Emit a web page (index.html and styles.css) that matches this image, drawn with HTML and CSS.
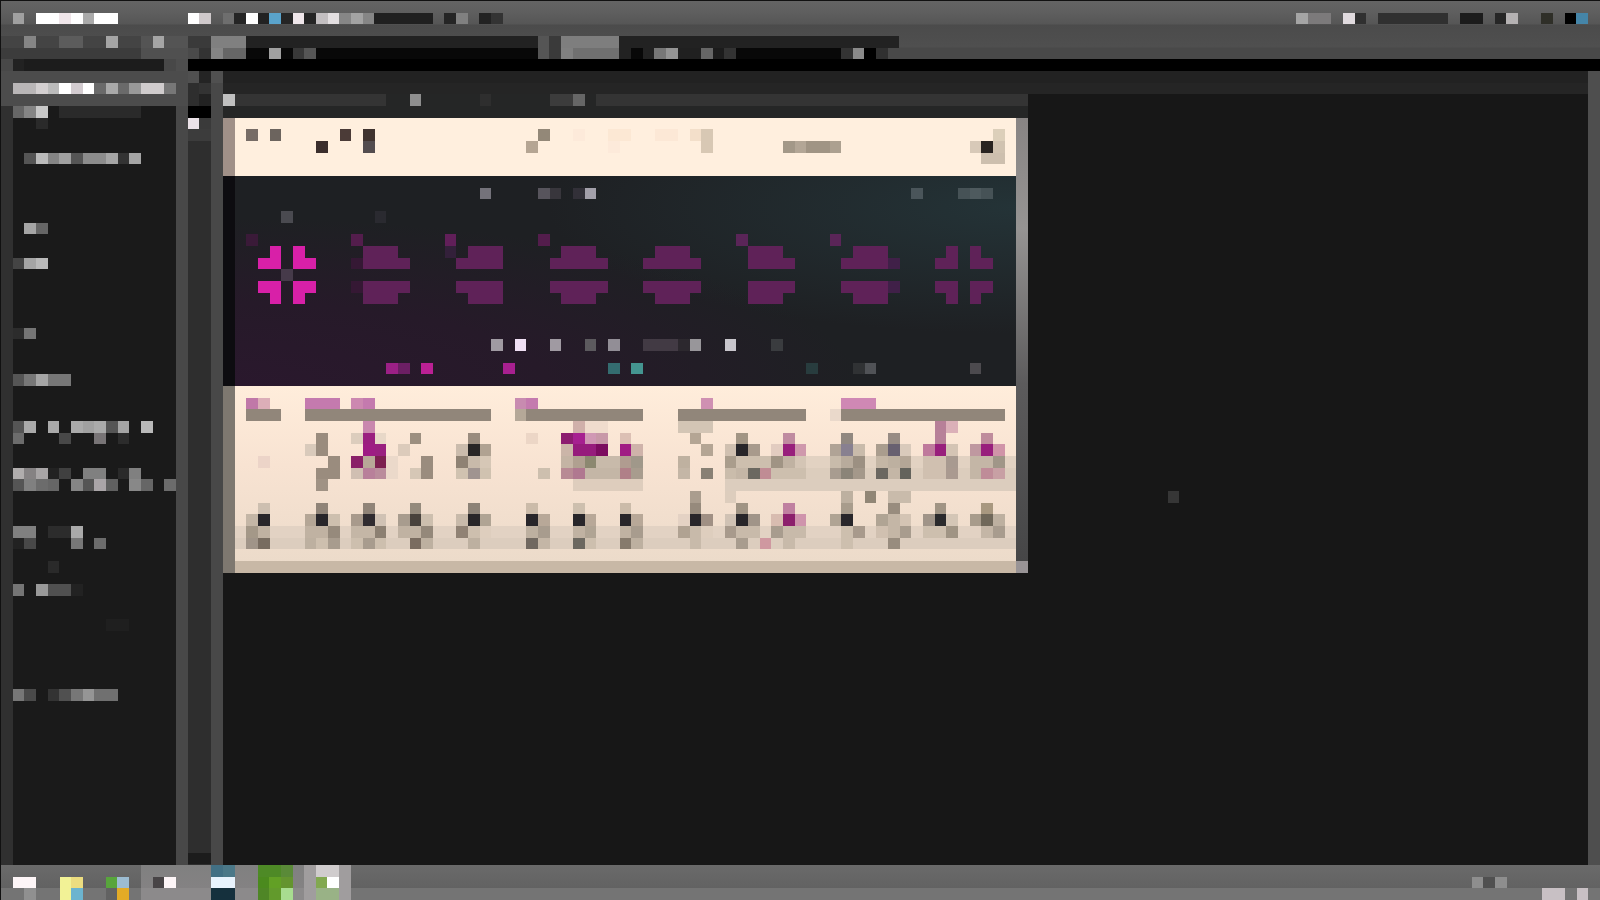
FILE: index.html
```html
<!DOCTYPE html>
<html lang="en">
<head>
<meta charset="utf-8">
<title>Workspace</title>
<link rel="stylesheet" href="styles.css">
</head>
<body>
<header class="topbar">
  <svg class="tiles" viewBox="0 0 77 6" aria-hidden="true"></svg>
  <svg class="tiles" viewBox="103 0 34 5" aria-hidden="true"></svg>
</header>
<div class="workspace">
  <aside class="browser">
    <svg class="tiles" viewBox="0 6 19 68" aria-hidden="true"></svg>
  </aside>
  <main class="stage">
    <svg class="tiles" viewBox="19 6 82 43" aria-hidden="true">
      <defs>
        <linearGradient id="panel" x1="0" y1="0" x2="0" y2="1"><stop offset="0" stop-color="#ffeddb"/><stop offset=".45" stop-color="#f8e3d2"/><stop offset="1" stop-color="#ecdbca"/></linearGradient>
        <linearGradient id="edge" x1="0" y1="0" x2="0" y2="1"><stop offset="0" stop-color="#888483"/><stop offset=".25" stop-color="#969493"/><stop offset=".6" stop-color="#5c5b5c"/><stop offset="1" stop-color="#464647"/></linearGradient>
        <radialGradient id="violet" cx="0" cy="1" r=".8"><stop offset="0" stop-color="#2a182d"/><stop offset=".5" stop-color="#261a29"/><stop offset="1" stop-color="#261a29" stop-opacity="0"/></radialGradient>
        <radialGradient id="teal" cx="1" cy=".15" r=".6"><stop offset="0" stop-color="#243337"/><stop offset="1" stop-color="#243337" stop-opacity="0"/></radialGradient>
      </defs>
      <rect x="19" y="8" width="69" height="2" fill="#252626"/>
      <rect x="19" y="10" width="1" height="5" fill="#a09088"/>
      <rect x="20" y="10" width="67" height="5" fill="#ffefde"/>
      <rect x="19" y="15" width="1" height="18" fill="#0d0c10"/>
      <rect x="20" y="15" width="67" height="18" fill="#1e2023"/>
      <rect x="20" y="15" width="67" height="18" fill="url(#violet)"/>
      <rect x="20" y="15" width="67" height="18" fill="url(#teal)"/>
      <rect x="19" y="33" width="1" height="16" fill="#7e7870"/>
      <rect x="20" y="33" width="67" height="15" fill="url(#panel)"/>
      <rect x="20" y="48" width="67" height="1" fill="#c8b8a6"/>
      <rect x="87" y="10" width="1" height="38" fill="url(#edge)"/>
      <rect x="87" y="48" width="1" height="1" fill="#999496"/>
    </svg>
  </main>
  <div class="rail"></div>
</div>
<footer class="taskbar">
  <nav class="apps" aria-label="Applications">
    <button class="app" aria-label="Start"><svg class="tiles" viewBox="0 74 4 3"></svg></button>
    <button class="app" aria-label="Files"><svg class="tiles" viewBox="4 74 4 3"></svg></button>
    <button class="app" aria-label="Browser"><svg class="tiles" viewBox="8 74 4 3"></svg></button>
    <button class="app open" aria-label="Player"><svg class="tiles" viewBox="12 74 4 3"></svg></button>
    <button class="app open" aria-label="Editor"><svg class="tiles" viewBox="16 74 5 3"></svg></button>
    <button class="app open" aria-label="Studio"><svg class="tiles" viewBox="21 74 5 3"></svg></button>
    <button class="app active" aria-label="Mixer"><svg class="tiles" viewBox="26 74 4 3"></svg></button>
  </nav>
  <svg class="tiles" viewBox="125 74 12 3" aria-hidden="true"></svg>
</footer>
<script src="tiles.js"></script>
</body>
</html>
```
FILE: styles.css
```css
* { box-sizing: border-box; }
html { height: 100%; }
body {
  margin: 0;
  min-height: 100%;
  display: flex;
  flex-direction: column;
  border-top: 1px solid #111;
  border-left: 1px solid #111;
  background: #171717;
  font-family: "Liberation Sans", Arial, sans-serif;
}
.tiles {
  display: block;
  flex: none;
  shape-rendering: crispEdges;
}
.topbar {
  display: flex;
  justify-content: space-between;
  height: 70px;
  background: linear-gradient(#646464 0, #5e5e5e 12px, #565656 23px, #4b4b4b 24px, #4f4f4f 46px, #494949 47px, #494949 58px, #000 58px);
}
.workspace {
  display: flex;
  flex: 1;
}
.browser {
  flex: none;
  background: linear-gradient(90deg, #303030 12px, #1a1a1a 12px, #1a1a1a 175px, #484848 175px, #484848 187px, #2e2e2e 187px, #2e2e2e 210px, #484848 210px);
}
.stage {
  flex: 1;
  background: linear-gradient(#222 12px, #252525 12px, #252525 23px, #171717 23px);
}
.rail {
  width: 12px;
  background: #4e4e4e;
}
.taskbar {
  display: flex;
  justify-content: space-between;
  height: 35px;
  background: linear-gradient(#6a6a6a, #626262 23px, #747474 23px);
}
.apps { display: flex; }
.app {
  padding: 0;
  border: 0;
  background: none;
}
.app.open { background: linear-gradient(#808080, #848283 23px, #8c8a8b 23px); }
.app.active { background: #a09d9e; }
```
FILE: tiles.js
```js
// Each line: row, then column[-lastColumn]:colour
const TILES = `
1 1:a0a0a0 3-4:fff 5:f0e6ea 6:fff 7:aaa 8-9:fff 16:fff 17:cfc9cb 19:6e6e6e 20:252525 21:fff 22:222 23:5aa3cb 24:252525 25:efe6ea 26:252525 27:c3bfc1 28:e3dfe1 29:868686 30:a3a3a3 31:868686 32-36:202020 38:252525 39:808080 41:222 42:333 111:a5a5a5 112-113:7c7a7b 115:e0dade 116:303030 118-123:303030 125-126:1c1c1c 128:262626 129:b5b2b3 132:2f2f28 134:000 135:4585a8
3 0-11:444 12-15:545454 2:858585 5-6:5c5c5c 9:a5a5a5 13:a5a5a5 16-17:3a3a3a 18-20:808080 21-45:222 46:555 47:3a3a3a 48-52:7e7e7e 53-76:222
4 0-11:3c3c3c 12-15:505050 16:4a4a4a 17:333 18:858585 19-20:666 21-22:080808 23:a0a0a0 24:080808 25:383838 26:555 27-45:080808 46:555 47:3a3a3a 48:808080 49-52:707070 53:222 54:080808 55:222 56:777 57:949494 58-59:202020 60:666 61:1c1c1c 62:333 63-71:080808 72:333 73:8a8a8a 74:000 75:303030
5 0:484848 1:222 2-13:1c1c1c 14:484848 15:4e4e4e
6 0-15:4c4c4c 16:505050 17:242424 18:505050
7 0-15:4c4c4c 1-2:b9b6b7 3:d3cfd0 4:bbb 5:fff 6:d3ccd0 7:fff 8:6a6a6a 9:a9a9a9 10:6a6a6a 11:999 12-13:d0cccd 14:777 16:2e2e2e 17:333
8 0-15:4c4c4c 17:222 19:c0c0c0 20-32:343434 35:8e8e8e 41:2e2e2e 47-48:3c3c3c 49:666 51-87:343434
9 1:666 2:858585 3:c8c8c8 5-11:2a2a2a 16-17:000
10 3:2a2a2a 16:ebe2e8 17:3a3a3a
11 16-17:3c3c3c 21:776c66 23:6c645e 29:4b3b37 31:40332f 46:938878 49:fdeada 52-53:fce8d4 56-57:fce8d6 59:f3dfca 60:d8c8b4 85:dccfba
12 27:3b2e2c 31:534c4e 45:b5a593 52:fdeada 60:d8c8b4 67:a39888 68:b3a696 69-70:a09484 71:aca090 83:d8c9b8 84:282320 85:d0c2b0
13 2:555 3:bbb 4:858585 5:a0a0a0 6:555 7-8:8c8c8c 9:a5a5a5 10:333 11:a5a5a5 84-85:cdbfae
16 41:74727a 46:57545c 47:38363c 49:323038 50:a3a0aa 78:4a555a 82:465256 83:4e5a5e 84:465256
18 24:4a4a50 32:2a2a30
19 2:a5a5a5 3:666
20 21:3a1a38 30:531d4c 38:611f59 46:531d4c 63:5a2558 71:5a2558
21 38:33203a 23:d820a8 25:d820a8 31-33:5f2258 40-42:5f2258 48-50:5f2258 56-58:5f2258 64-66:5f2258 73-75:5f2258 81:5f2258 83:5f2258
22 1:444 2:a5a5a5 3:b9b9b9 22-23:d820a8 25-26:d820a8 30:351834 31-34:5f2258 39-42:5f2258 47-51:5f2258 55-59:5f2258 64-67:5f2258 72-75:5f2258 76:402048 80-81:5f2258 83-84:5f2258
23 24:463a4a
24 22-23:d820a8 25-26:d820a8 30:351834 31-34:5f2258 39-42:5f2258 47-51:5f2258 55-59:5f2258 64-67:5f2258 72-75:5f2258 76:402048 80-81:5f2258 83-84:5f2258
25 23:d820a8 25:d820a8 31-33:5f2258 40-42:5f2258 48-50:5f2258 56-58:5f2258 64-66:5f2258 73-75:5f2258 81:5f2258 83:5f2258
28 1:2c2c2c 2:757575
29 42:a09aa2 44:f0e0f4 47:a09aa2 50:5c5a5e 52:928e96 55-57:423a44 58:2c282e 59:98969a 62:c8c6cc 66:3a3c3f
31 33:9c2086 34:6c1f64 36:bb2094 43:a82090 52:346c70 54:449590 69:283c3e 73:303234 74:505256 83:4c4a4e
32 1:555 2:777 3:a5a5a5 4-5:777
34 21:c078a8 22:dcaeb8 26-28:c47aae 30:cc88b0 31:c47aae 44:c88bb0 45:c47aae 60:cf90b2 72-74:cf88b4
35 21-23:91867a 26-41:91867a 44:b5a898 45-54:91867a 58-68:91867a 71:ead9cb 72-85:91867a
36 1:555 2:aaa 4:aaa 6:aaa 7:a0a0a0 8:aaa 9:555 10:a5a5a5 12:b9b9b9 31:c987ae 49:d0b0aa 50-51:f0dccd 58-60:d3c5b5 80:b78098 81:dbb0b8
37 1:6c6c6c 5:484848 8:787476 10:2c2c2c 27:9a8c7e 30:dccdbd 31:9a1f80 32:e8d8c8 35:9c8f80 40:9a8c7e 45:ecd6c6 48:8c1c70 49:a62090 50:d098b4 51:c898a8 53:dcc0b4 59:b4a594 63:a29584 67:bf8ba0 72:918880 76:988c84 80:b78098 84:bf8c9c
38 26:d9cabb 27:9a8c7e 31:9e1c84 32:9a2080 34:dccbbb 39:cbbcad 40:282626 41:b0a292 48:cbb5a8 49-50:961c7c 51:7c0c60 53:a01c84 54:cfb3aa 60:b4a594 62:d0c0b0 63:28262a 64:a89a8c 66:e2ccc0 67:981f7c 68:cf98ac 71:b0a396 72:888090 73:c9bbab 75:aa9d8e 76:686070 77:d9cabb 79:bf7a9c 80:981f7c 81:d4c4b4 83:bf98a0 84:981f7c 85:d094a8
39 62-86:e2d2c2 22:ecd4c8 28:9a8c7e 30:8a2068 31:b8a898 32:7c2050 33:ebd9ca 36:9a8c7e 39:8f8274 40:c8baaa 41:d6c7b6 48:c4b4a4 49:b0a090 50:8c8870 51-52:c8baaa 53:b09c90 54:a0988a 58:bfb1a0 62:aa9d8c 63-65:cdbfae 66:a09484 67:c0b2a2 68:d4c5b5 71:c8bbab 72:b8ab9c 73:9c9082 75:c4b6a5 76:bdb0a0 77:b4a696 79-80:d0c0b0 81:a89a90 83-84:c4b6a6 85:a09688
40 62-86:dccdbd 27-28:9a8c7e 30:d0bfb2 31:b8809a 32:ba8c9c 33:ebd9ca 35:d6c7b6 36:9a8c7e 39:d0c2b0 40:a09490 41:d0c2b0 46:cdbfae 48:b88a94 49:b07890 50-52:c4b6a6 53:b08088 54:a89c8e 58:c4b6a6 60:888074 62:cabcab 63:c4b6a6 64:6b6860 65:c08c94 66-68:cdbfae 71:a89c90 72:8b8478 73:a4988a 75:6b6760 76:c4b6a6 77:64635c 79-80:d0c0b0 81:aa9a90 83:c4b6a6 84:bf8c98 85:c8a0a4 1:b0adad 2:858283 3:a8a5a6 4:222 5:404040 7-8:808080 10:2a2a2a 11:808080
41 27:a09284 49-54:decdbd 62-86:dccdbe 1:555 2:808080 3:6c6c6c 4:666 6:858585 7:555 8:aaa5a8 9:606060 11:888 12:666 14:6c6c6c
42 59:aa9d8e 62:ddcdbd 72:bdb0a0 74:918676 76-77:c9bbab 100:363636
43 22:cdbfb0 27:908478 31:908478 35:948a7c 40:8c8276 45:cbbba9 49:cdbfae 53:cbbba9 59:968a7c 63:a09484 67:bf80a0 72:a89c8c 76:988c7e 80:a09484 84:a89880
44 21:c4b6a6 22:28262a 26:b4a696 27:28262a 28:cdbfae 30:a89a8c 31:302c30 32:d0c2b4 34:a89c8e 35:48423c 36:cdbfae 39:c8baaa 40:282628 41:b0a494 45:28262a 46:b8a898 49:28262a 50:b8a898 53:28262a 54:b8a898 58:e4d2c4 59:28262a 60:a09084 62:d0c2b4 63:28262a 64:a09488 66:d8bcb0 67:8c1f6c 68:cf94ac 71:b0a494 72:28262a 75:b0a494 76:c4b6a6 77:d4c4b4 79:a09488 80:2a2a2c 81:d4c6b6 83:a89c8c 84:70685a 85:bdb0a0
45 20-86:e2d2c3 1-2:808080 4-5:2c2c2c 6:aaa 21:a49888 22:c0b2a2 26-27:c0b2a2 28:968a7c 30-31:c4b6a6 32:8c8072 34-35:c0b2a2 36:94887a 39:908274 40:cdbfae 41:decebe 45:bdb0a0 46:a89c8e 49:c0b2a2 50:b0a494 53:c0b2a2 54:a89c8e 58:b0a292 59:c8baaa 60:decebe 62:a89a8c 63-64:c8baaa 66:a89c8e 67-68:c8baaa 72:cdbfae 73:a89a8c 75:d0c0b0 76:c4b6a6 77:a89c8e 79-80:cdbfae 81:a09484 84:c4b6a6 85:a89c8e
46 1:222 2:484848 6:777 8:6c6c6c 20-86:dccdbe 21:a09488 22:786c60 26:bdb0a0 27:cdbfae 28:a89c8e 30:cdbfae 31:a89c8e 32:cdbfae 35:7a6c60 36:bdb0a0 40:bdb0a0 45:706860 46:c4b6a6 49:6c6860 50:cdbfae 53:867a6c 54:bdb0a0 59:c8baaa 63:a89c8e 65:cf98a0 67:c8baaa 72:cdbfae 76:988c7e
48 4:2a2a2a
50 1:757575 3:999 4-5:505050 6:222
53 9-10:1f1f1f
59 1:777 2:4a4a4a 4:333 5:505050 6:777 7:959595 8-9:707070
73 16-17:1c1c1c
74 18:427084 19:4b7888 22-23:4e8a26 24:5a8a38 27-28:d0cccd
75 1-2:fdf5f7 5:f2f296 6:ecdd80 9:58a53c 10:9cbcd2 13:484446 14:fdf5f7 18-19:e8f3fd 22:4b8a1e 23:62a025 24:64942f 27:82a850 28:fff 126:8e8e8e 127:505050 128:8e8e8e
76 2:909090 5:f2f296 6:6cb4cf 9:626262 10:e3ab26 18-19:15303d 22:4f8626 23:629a2c 24:a8dc90 27-28:99b286 132-133:c8c0c4 135:c8c0c4
`;
const CELL = 35 / 3;
const NS = "http://www.w3.org/2000/svg";
const tiles = TILES.trim().split("\n").flatMap(line => {
  const [row, ...runs] = line.split(" ");
  return runs.map(run => {
    const [span, color] = run.split(":");
    const [from, to = from] = span.split("-").map(Number);
    return { y: +row, x: from, w: to - from + 1, color: "#" + color };
  });
});
document.querySelectorAll("svg.tiles").forEach(svg => {
  const { x, y, width, height } = svg.viewBox.baseVal;
  svg.setAttribute("width", width * CELL);
  svg.setAttribute("height", height * CELL);
  for (const t of tiles) {
    if (t.y < y || t.y >= y + height || t.x < x || t.x >= x + width) continue;
    const r = document.createElementNS(NS, "rect");
    r.setAttribute("x", t.x);
    r.setAttribute("y", t.y);
    r.setAttribute("width", t.w);
    r.setAttribute("height", 1);
    r.setAttribute("fill", t.color);
    svg.append(r);
  }
});
```
